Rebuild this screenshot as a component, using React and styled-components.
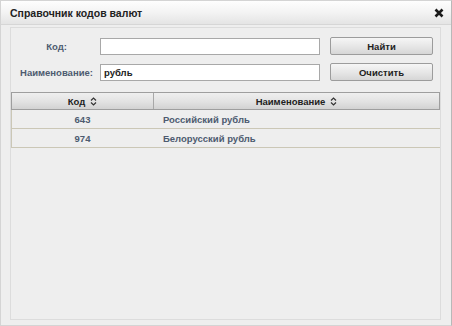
import React from 'react';
import styled, { createGlobalStyle } from 'styled-components';

const GlobalStyle = createGlobalStyle`
  html, body {
    margin: 0;
    padding: 0;
    background: #eeeeee;
  }
  body {
    font-family: "Liberation Sans", Arial, sans-serif;
  }
`

// window frame
const Window = styled.div`
  width: 452px;
  height: 326px;
  box-sizing: border-box;
  display: flex;
  flex-direction: column;
  background: #eeeeee;
  border: 1px solid #d4d4d4;
  border-right-color: #b8b8b8;
`

const TitleBar = styled.div`
  height: 23px;
  flex: none;
  display: flex;
  align-items: center;
  justify-content: space-between;
  padding: 0 6px 0 9px;
  background: linear-gradient(to bottom, #fefefe 0%, #f3f3f3 50%, #e4e4e4 100%);
  border-bottom: 1px solid #d6d6d6;
`

const Title = styled.span`
  font-size: 10.5px;
  font-weight: bold;
  color: #222;
`

const CloseButton = styled.button`
  width: 12px;
  height: 12px;
  padding: 0;
  border: none;
  background: none;
  display: flex;
  align-items: center;
  justify-content: center;
  cursor: pointer;
`

const Body = styled.div`
  flex: 1;
  padding: 2px 10px 5px 9px;
  display: flex;
`

const Panel = styled.div`
  flex: 1;
  border: 1px solid #dcdcdc;
  display: flex;
  flex-direction: column;
`

const Form = styled.div`
  display: grid;
  grid-template-columns: 73px 220px 106px;
  column-gap: 7px;
  row-gap: 8px;
  padding: 9px 0 0 9px;
  align-items: center;
`

const Label = styled.label`
  text-align: center;
  font-size: 9.5px;
  font-weight: bold;
  color: #4d5b70;
  white-space: nowrap;
`

const Input = styled.input`
  height: 17px;
  box-sizing: border-box;
  border: 1px solid #a8a8a8;
  background: #fff;
  padding: 0 3px;
  font-family: "Liberation Sans", Arial, sans-serif;
  font-size: 9.5px;
  font-weight: bold;
  color: #222;
  outline: none;
`

const Button = styled.button`
  height: 18px;
  margin-left: 3px;
  box-sizing: border-box;
  border: 1px solid #9c9c9c;
  border-radius: 2px;
  background: linear-gradient(to bottom, #f6f6f6 0%, #e4e4e4 60%, #d6d6d6 100%);
  font-family: "Liberation Sans", Arial, sans-serif;
  font-size: 9.5px;
  font-weight: bold;
  color: #222;
  padding: 0;
`

const Table = styled.div`
  margin-top: 11px;
  display: flex;
  flex-direction: column;
`

const HeaderRow = styled.div`
  display: grid;
  grid-template-columns: 141px 1fr;
  height: 18px;
  box-sizing: border-box;
  border: 1px solid #9e9e9e;
  background: linear-gradient(to bottom, #efefef 0%, #e2e2e2 55%, #d2d2d2 100%);
`

const HeaderCell = styled.div`
  display: flex;
  align-items: center;
  justify-content: center;
  gap: 5px;
  font-size: 9.5px;
  font-weight: bold;
  color: #222;
  border-left: ${p => (p.first ? 'none' : '1px solid #a8a8a8')};
`

const Row = styled.div`
  display: grid;
  grid-template-columns: 141px 1fr;
  height: 19px;
  box-sizing: border-box;
  border-left: 1px solid #cbc7b6;
  border-bottom: 1px solid #cbc7b6;
`

const Cell = styled.div`
  display: flex;
  align-items: center;
  justify-content: ${p => (p.center ? 'center' : 'flex-start')};
  padding-left: ${p => (p.center ? '0' : '10px')};
  font-size: 9.5px;
  font-weight: bold;
  color: #4d5b70;
`

const SortIcon = () => (
  <svg width="7" height="9" viewBox="0 0 7 9">
    <path d="M1 3.5 L3.5 1 L6 3.5 M1 5.5 L3.5 8 L6 5.5" fill="none" stroke="#333" strokeWidth="1.2" />
  </svg>
);

const CloseIcon = () => (
  <svg width="10" height="10" viewBox="0 0 10 10">
    <path d="M1.5 1.5 L8.5 8.5 M8.5 1.5 L1.5 8.5" stroke="#1a1a1a" strokeWidth="2.6" strokeLinecap="butt" />
  </svg>
);

const currencies = [
  { code: '643', name: 'Российский рубль' },
  { code: '974', name: 'Белорусский рубль' }
];

export default function App() {
  return (
    <>
      <GlobalStyle />
      <Window>
        <TitleBar>
          <Title>Справочник кодов валют</Title>
          <CloseButton><CloseIcon /></CloseButton>
        </TitleBar>
        <Body>
          <Panel>
            <Form>
              <Label>Код:</Label>
              <Input defaultValue="" />
              <Button>Найти</Button>
              <Label>Наименование:</Label>
              <Input defaultValue="рубль" />
              <Button>Очистить</Button>
            </Form>
            <Table>
              <HeaderRow>
                <HeaderCell first>Код <SortIcon /></HeaderCell>
                <HeaderCell>Наименование <SortIcon /></HeaderCell>
              </HeaderRow>
              {currencies.map(c => (
                <Row key={c.code}>
                  <Cell center>{c.code}</Cell>
                  <Cell>{c.name}</Cell>
                </Row>
              ))}
            </Table>
          </Panel>
        </Body>
      </Window>
    </>
  );
}
